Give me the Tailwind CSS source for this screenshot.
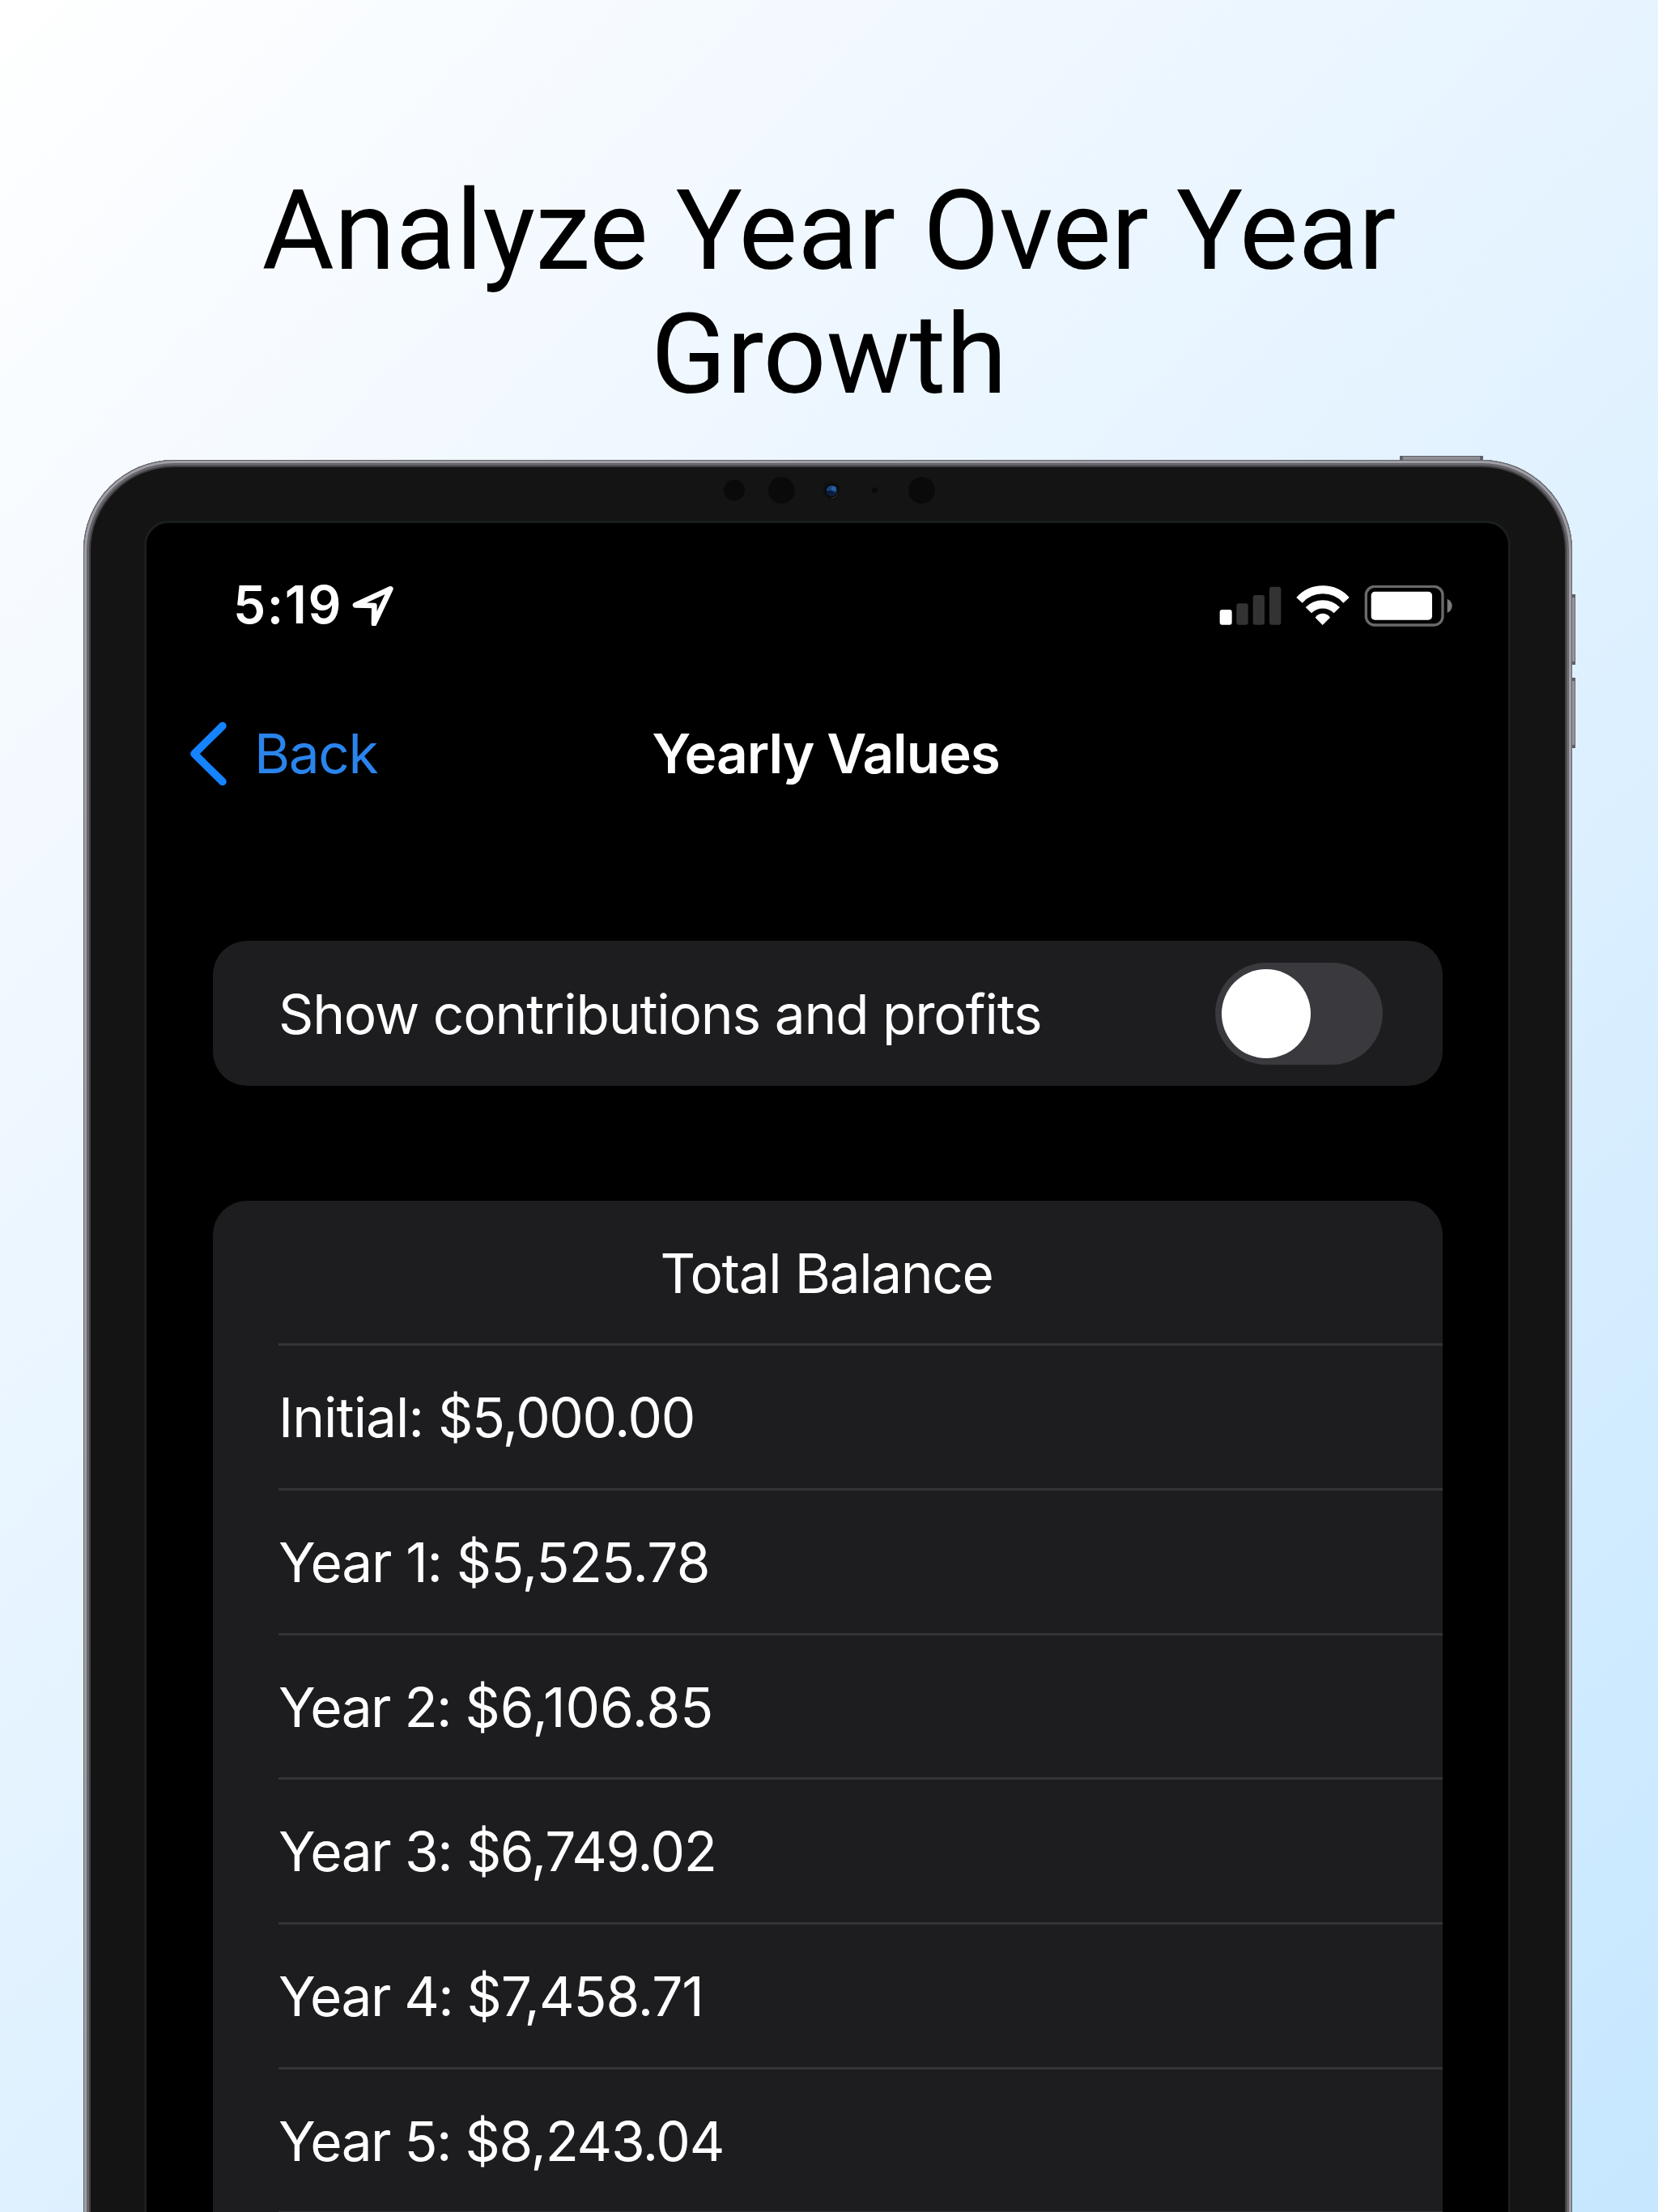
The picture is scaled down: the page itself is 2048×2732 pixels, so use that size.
<!DOCTYPE html>
<html lang="en">
<head>
<meta charset="utf-8">
<title>Yearly Values</title>
<script src="https://cdn.jsdelivr.net/npm/@tailwindcss/browser@4"></script>
</head>
<body class="w-[2048px] h-[2732px] overflow-hidden bg-[linear-gradient(135deg,#ffffff_0%,#f1f8ff_25%,#c6e7ff_100%)] font-['Inter',sans-serif] text-white">
<div class="w-[2048px] h-[2732px] overflow-hidden flex flex-col">
  <header class="h-[568px] shrink-0 pt-[209px] text-center text-black font-['Roboto',sans-serif] text-[137px] leading-[153px]">
    <h1>Analyze Year Over Year<br>Growth</h1>
  </header>

  <main class="relative shrink-0 w-[1839px] h-[2400px] ml-[103px] rounded-[112px] bg-[#141414] p-[9px] shadow-[inset_0_0_0_1px_#606265,inset_0_0_0_4px_#a09fa8,inset_0_0_0_7px_#66656b,inset_0_0_0_9px_#404042]">
    <!-- hardware buttons -->
    <div class="absolute left-[1626px] -top-[5px] w-[103px] h-[5px] bg-[#8e8e96] border-t border-x-4 border-[#606166]"></div>
    <div class="absolute left-[1839px] top-[166px] w-[4px] h-[87px] bg-[#96969e] border-r border-y-4 border-[#606166]"></div>
    <div class="absolute left-[1839px] top-[269px] w-[4px] h-[87px] bg-[#96969e] border-r border-y-4 border-[#606166]"></div>

    <!-- sensor bar -->
    <div class="h-[66px] flex justify-center">
      <svg class="w-[330px] h-[66px]" viewBox="0 9 330 66">
        <g transform="translate(2 0)">
        <circle cx="47" cy="37.6" r="13" fill="#0a0a0a"/>
        <circle cx="105.3" cy="37.6" r="16.5" fill="#0a0a0a"/>
        <circle cx="167.5" cy="37.6" r="11" fill="#101010"/>
        <path d="M175 40a8.5 8.5 0 0 1-8 7" stroke="#2b2b2b" stroke-width="1.5" fill="none"/>
        <circle cx="167.2" cy="38" r="8" fill="#070809"/>
        <circle cx="167.2" cy="38" r="6.5" fill="#1a4478"/>
        <path d="M161 38a6.5 6.5 0 0 0 12 3l-5-3z" fill="#0c1c38"/>
        <circle cx="170" cy="35.500" r="3" fill="#2461a3"/>
        <circle cx="220" cy="37.6" r="3.500" fill="#0a0a0a"/>
        <circle cx="278.500" cy="37.6" r="16.500" fill="#0a0a0a"/>
        </g>
      </svg>
    </div>

    <section class="ml-[66px] w-[1688px] h-[2300px] rounded-[30px] border-[3px] border-[#1a1e1e] bg-black">
      <!-- status bar -->
      <div class="flex items-start pt-[77px] pl-[107px] h-[160px]">
        <div class="w-[147px] text-[64px] leading-[48px] font-semibold tracking-[0.025em] whitespace-nowrap">5:19</div>
        <svg class="w-[52px] h-[50px]" viewBox="1038 517 156 150"><path d="M1180 530 1050 590l70 2-1 67z" fill="none" stroke="#fff" stroke-width="20" stroke-linejoin="round"/></svg>
        <svg class="ml-auto mr-[68px] w-[289px] h-[51px]" viewBox="139 516 867 153">
          <rect x="141" y="606" width="45" height="56" rx="9" fill="#fff"/>
          <g fill="#333"><rect x="203" y="583" width="43" height="79" rx="9"/><rect x="264" y="552" width="43" height="110" rx="9"/><rect x="325" y="521" width="43" height="141" rx="9"/></g>
          <g fill="none" stroke="#fff"><path d="M436 571a116 116 0 0 1 174 0" stroke-width="30"/><path d="M470 608a73.600 73.600 0 0 1 105 0" stroke-width="31"/></g>
          <path d="M495 635a33 33 0 0 1 55 0l-28 28z" fill="#fff"/>
          <rect x="683" y="520" width="284" height="143" rx="32" fill="none" stroke="#6a6a6a" stroke-width="10"/>
          <rect x="702" y="539" width="226" height="105" rx="14" fill="#fff"/>
          <path d="M984 566q17 7 18 26-1 19-18 26z" fill="#7a7a7a"/>
        </svg>
      </div>

      <!-- navigation bar -->
      <nav class="grid grid-cols-3 items-center h-[250px] pl-[52px] pr-[56px] text-[67.500px] leading-[80px]">
        <a class="flex items-center gap-[33px] text-[#2a84ec]">
          <svg class="w-[48px] h-[80px]" viewBox="0 0 48 80"><path d="M42 5.500 7 40 42 74.500" fill="none" stroke="#1583fd" stroke-width="9.500" stroke-linecap="round" stroke-linejoin="round"/></svg>
          <span class="tracking-[-0.02em]">Back</span>
        </a>
        <h2 class="text-center font-semibold tracking-[-0.016em] whitespace-nowrap">Yearly Values</h2>
      </nav>

      <div class="ml-[82px] mt-[105.500px] w-[1519px] h-[179px] rounded-[42px] bg-[#1d1d1f] flex items-center justify-between pt-px pl-[81px] pr-[74px]">
        <span class="pt-[2px] text-[67.500px] tracking-[-1.180px] whitespace-nowrap">Show contributions and profits</span>
        <span class="w-[207px] h-[126px] rounded-full bg-[#3a393e] p-[8px]"><span class="block size-[110px] rounded-full bg-white"></span></span>
      </div>

      <ul class="ml-[82px] mt-[142px] w-[1519px] h-[1400px] rounded-[42px] bg-[#1d1d1f] pt-px pl-[81px] text-[67.500px] tracking-[-0.02em]">
        <li class="h-[178.700px] pt-[2px] flex items-center justify-center pr-[84px] border-b-[3px] border-[#343438]">Total Balance</li>
        <li class="h-[178.700px] pt-[2px] flex items-center border-b-[3px] border-[#343438] whitespace-pre"><span class="tracking-[-0.950px]">Initial: </span><span>$5,000.00</span></li>
        <li class="h-[178.700px] pt-[2px] flex items-center border-b-[3px] border-[#343438] whitespace-pre"><span class="tracking-[-1.150px]">Year 1: </span><span class="tracking-[-0.750px]">$5,525.78</span></li>
        <li class="h-[178.700px] pt-[2px] flex items-center border-b-[3px] border-[#343438] whitespace-pre"><span class="tracking-[-1.500px]">Year 2: </span><span class="tracking-[0px]">$6,106.85</span></li>
        <li class="h-[178.700px] pt-[2px] flex items-center border-b-[3px] border-[#343438] whitespace-pre"><span class="tracking-[-1.400px]">Year 3: </span><span>$6,749.02</span></li>
        <li class="h-[178.700px] pt-[2px] flex items-center border-b-[3px] border-[#343438] whitespace-pre"><span class="tracking-[-1.550px]">Year 4: </span><span class="tracking-[-1.050px]">$7,458.71</span></li>
        <li class="h-[178.700px] pt-[2px] flex items-center border-b-[3px] border-[#343438] whitespace-pre"><span class="tracking-[-1.500px]">Year 5: </span><span class="tracking-[-1.250px]">$8,243.04</span></li>
      </ul>
    </section>
  </main>
</div>
</body>
</html>
